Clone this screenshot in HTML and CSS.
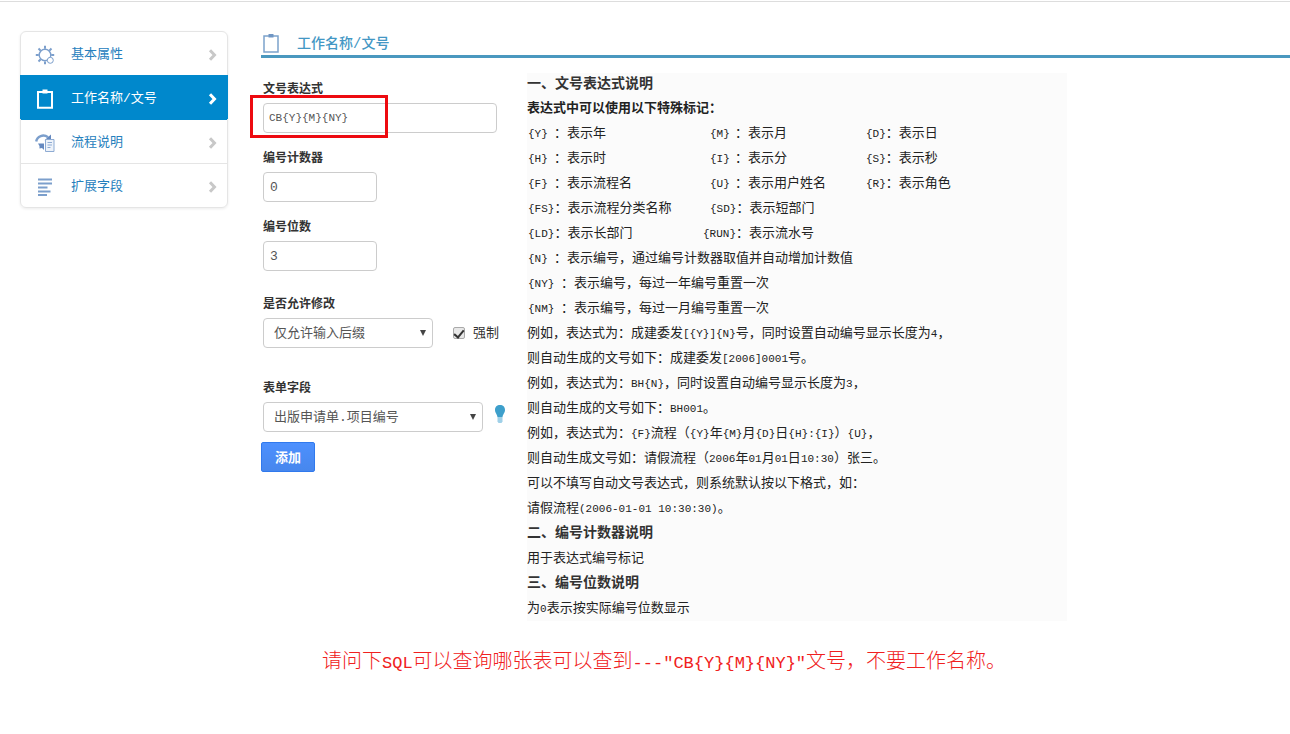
FILE: index.html
```
<!DOCTYPE html>
<html lang="zh-CN">
<head>
<meta charset="utf-8">
<title>工作名称/文号</title>
<link rel="stylesheet" href="styles.css">
</head>
<body>
<div class="layout">
  <nav class="menu">
    <a class="menu-item" href="#basic">
      <svg class="icon" viewBox="0 0 20 20" fill="none" stroke="#7c9fcc">
        <circle cx="10" cy="10" r="5.8" stroke-width="1.4"/>
        <path d="M10 .8v3M10 16.4v2.8M.8 10h3M16.2 10h3M3.5 3.5l2.2 2.2M16.5 3.5l-2.2 2.2M3.5 16.5l2.2-2.2" stroke-width="2"/>
        <circle cx="15.3" cy="15.3" r="3" fill="#fff"/>
      </svg>
      <span class="menu-text">基本属性</span>
      <svg class="chevron" viewBox="0 0 8 12"><path d="M1.5 1.2 6 6l-4.5 4.8" fill="none" stroke="currentColor" stroke-width="3"/></svg>
    </a>
    <a class="menu-item active" href="#name">
      <svg class="icon" viewBox="0 0 20 20"><path d="M3 3h14v15.8H3z" fill="none" stroke="#fff" stroke-width="2"/><path d="M7.5.5h5v4h-5z" fill="#fff"/></svg>
      <span class="menu-text">工作名称/文号</span>
      <svg class="chevron" viewBox="0 0 8 12"><path d="M1.5 1.2 6 6l-4.5 4.8" fill="none" stroke="currentColor" stroke-width="3"/></svg>
    </a>
    <a class="menu-item" href="#desc">
      <svg class="icon" viewBox="0 0 20 20">
        <path d="M1.2 8.500C2 3 8.500.8 13 4.200" fill="none" stroke="#7c9fcc" stroke-width="2.4"/>
        <path d="M16 1.5v5.800H9.500z" fill="#6589c0"/>
        <path d="M3 10.500h6v6.500l-2-2-2.500.5 0-2.500z" fill="#6589c0"/>
        <path d="M10.500 6.500h8.500v12h-8.500z" fill="#eef3fa" stroke="#8eabd3"/>
        <path d="M12.500 9.500h4.500M12.500 12h4.500M12.500 14.500h3" stroke="#8eabd3"/>
      </svg>
      <span class="menu-text">流程说明</span>
      <svg class="chevron" viewBox="0 0 8 12"><path d="M1.5 1.2 6 6l-4.5 4.8" fill="none" stroke="currentColor" stroke-width="3"/></svg>
    </a>
    <a class="menu-item" href="#fields">
      <svg class="icon" viewBox="0 0 20 20"><path d="M3 2.500h14M3 6.500h14M3 10.500h9.500M3 14.500h12.500M3 18h9" stroke="#7c9fcc" stroke-width="1.8"/></svg>
      <span class="menu-text">扩展字段</span>
      <svg class="chevron" viewBox="0 0 8 12"><path d="M1.5 1.2 6 6l-4.5 4.8" fill="none" stroke="currentColor" stroke-width="3"/></svg>
    </a>
  </nav>

  <main class="main">
    <h1 class="title">
      <svg class="icon" viewBox="0 0 20 20"><path d="M3 3h14v16H3z" fill="none" stroke="#7ca3cc" stroke-width="1.5"/><path d="M7.5 1h5v3.500h-5z" fill="#7096c4"/></svg>
      <span class="title-text">工作名称/文号</span>
    </h1>
    <div class="content">
      <form class="form">
        <div class="field">
          <label class="label" for="expr">文号表达式</label>
          <div class="marked">
            <input class="control code" id="expr" type="text" value="CB{Y}{M}{NY}">
            <div class="mark"></div>
          </div>
        </div>
        <div class="field">
          <label class="label" for="counter">编号计数器</label>
          <input class="control short" id="counter" type="text" value="0">
        </div>
        <div class="field">
          <label class="label" for="digits">编号位数</label>
          <input class="control short" id="digits" type="text" value="3">
        </div>
        <div class="field field-modify">
          <label class="label" for="modify">是否允许修改</label>
          <div class="row">
            <div class="select medium"><select class="control" id="modify"><option>仅允许输入后缀</option></select></div>
            <label class="check"><input class="checkbox" type="checkbox" checked>强制</label>
          </div>
        </div>
        <div class="field field-form">
          <label class="label" for="field">表单字段</label>
          <div class="row tight">
            <div class="select wide"><select class="control" id="field"><option>出版申请单.项目编号</option></select></div>
            <svg class="bulb" viewBox="0 0 12 20"><path d="M6 1C3 1 1 3 1 5.900c0 3 2.200 4 2.500 7.600h5C8.800 9.900 11 8.900 11 5.900 11 3 9 1 6 1z" fill="#3d9fcb"/><path d="M3.500 14h5v3.500L7.500 19h-3l-1-1.500z" fill="#9fd0e8"/></svg>
          </div>
        </div>
        <button class="button" type="button">添加</button>
      </form>

      <section class="help">
        <h2 class="help-title first">一、文号表达式说明</h2>
        <p class="strong">表达式中可以使用以下特殊标记：</p>
        <div class="marks">
          <div><code>{Y}</code>：表示年</div><div><code>{M}</code>：表示月</div><div><code>{D}</code>：表示日</div>
          <div><code>{H}</code>：表示时</div><div><code>{I}</code>：表示分</div><div><code>{S}</code>：表示秒</div>
          <div><code>{F}</code>：表示流程名</div><div><code>{U}</code>：表示用户姓名</div><div><code>{R}</code>：表示角色</div>
          <div><code>{FS}</code>：表示流程分类名称</div><div><code>{SD}</code>：表示短部门</div><div></div>
          <div><code>{LD}</code>：表示长部门</div><div><code class="long">{RUN}</code>：表示流水号</div><div></div>
        </div>
        <p class="mark-line"><code>{N}</code>：表示编号，通过编号计数器取值并自动增加计数值</p>
        <p class="mark-line two"><code>{NY}</code>：表示编号，每过一年编号重置一次</p>
        <p class="mark-line two"><code>{NM}</code>：表示编号，每过一月编号重置一次</p>
        <p>例如，表达式为：成建委发<code>[{Y}]{N}</code>号，同时设置自动编号显示长度为<code>4</code>，</p>
        <p>则自动生成的文号如下：成建委发<code>[2006]0001</code>号。</p>
        <p>例如，表达式为：<code>BH{N}</code>，同时设置自动编号显示长度为<code>3</code>，</p>
        <p>则自动生成的文号如下：<code>BH001</code>。</p>
        <p>例如，表达式为：<code>{F}</code>流程（<code>{Y}</code>年<code>{M}</code>月<code>{D}</code>日<code>{H}:{I}</code>）<code>{U}</code>，</p>
        <p>则自动生成文号如：请假流程（<code>2006</code>年<code>01</code>月<code>01</code>日<code>10:30</code>）张三。</p>
        <p>可以不填写自动文号表达式，则系统默认按以下格式，如：</p>
        <p>请假流程<code>(2006-01-01 10:30:30)</code>。</p>
        <h2 class="help-title">二、编号计数器说明</h2>
        <p>用于表达式编号标记</p>
        <h2 class="help-title">三、编号位数说明</h2>
        <p>为<code>0</code>表示按实际编号位数显示</p>
      </section>
    </div>
    <p class="question">请问下<code>SQL</code>可以查询哪张表可以查到<code>---"CB{Y}{M}{NY}"</code>文号，不要工作名称。</p>
  </main>
</div>
</body>
</html>
```
FILE: styles.css
```
* { box-sizing: border-box; }
body {
  margin: 0;
  background: #fff;
  color: #333;
  font: 13px/25px "Liberation Mono", "Noto Sans CJK SC", monospace;
}
body::before {
  content: "";
  display: block;
  height: 1px;
  margin-top: 1px;
  background: #ddd;
}
p, h1, h2 { margin: 0; }
code { font: 11px "Liberation Mono", monospace; }
.layout {
  display: flex;
  align-items: flex-start;
  padding: 29px 0 40px 20px;
}

.menu {
  flex: 0 0 208px;
  border: 1px solid #e5e5e5;
  border-radius: 6px;
  box-shadow: 0 1px 3px rgba(0, 0, 0, .08);
}
.menu-item {
  display: flex;
  align-items: center;
  height: 44px;
  padding: 2px 10px 0 14px;
  color: #2680bd;
  text-decoration: none;
}
.menu-item:first-child { height: 43px; }
.menu-item + .menu-item { border-top: 1px solid #e5e5e5; }
.menu-item.active {
  margin: 0 -1px;
  padding: 2px 11px 0 15px;
  border-color: #0088cc;
  background: #0088cc;
  color: #fff;
}
.menu-item.active + .menu-item { border-color: #0088cc; }
.icon { flex: none; width: 20px; height: 20px; }
.menu-text { flex: 1; padding-left: 16px; }
.chevron { width: 9px; height: 12px; color: #c8c8c8; }
.active .chevron { color: #fff; }

.main { flex: 1; min-width: 0; padding-left: 33px; }
.title {
  display: flex;
  align-items: center;
  gap: 16px;
  height: 27px;
  border-bottom: 3px solid #4a98bf;
  color: #4397c4;
  font-size: 14px;
  font-weight: 500;
}
.title-text { padding-top: 2px; }
.content { display: flex; align-items: flex-start; gap: 30px; padding-top: 15px; }

.form { flex: 0 0 236px; min-width: 0; padding: 5px 0 0 2px; }
.field { margin-bottom: 14px; }
.field-modify { margin: 22px 0 29px; }
.field-form { margin-bottom: 10px; }
.label {
  display: block;
  margin-bottom: 3px;
  padding-top: 2px;
  font-size: 12px;
  font-weight: 700;
  line-height: 20px;
}
.control {
  display: block;
  width: 100%;
  height: 30px;
  padding: 0 6px;
  border: 1px solid #ccc;
  border-radius: 4px;
  background: #fff;
  color: #555;
  font: 13px "Liberation Mono", "Noto Sans CJK SC", monospace;
}
.control.code { padding: 0 5px; font-size: 11px; }
.short { width: 114px; }
.marked { position: relative; }
.mark {
  position: absolute;
  inset: -8px 109px -5px -13px;
  border: 3px solid #ed0a10;
  pointer-events: none;
}
.row { display: flex; align-items: center; gap: 20px; }
.row.tight { gap: 11px; }
.select { position: relative; flex: none; }
.select .control { appearance: none; padding: 0 20px 0 10px; }
.select::after {
  content: "";
  position: absolute;
  top: 12px;
  right: 7px;
  border: solid transparent;
  border-width: 6px 3px 0;
  border-top-color: #444;
  pointer-events: none;
}
.medium { width: 170px; }
.wide { width: 220px; }
.check { display: flex; align-items: center; gap: 8px; white-space: nowrap; }
.checkbox {
  appearance: none;
  display: grid;
  place-items: center;
  width: 12px;
  height: 12px;
  margin: 0;
  border: 1px solid #aaa;
  border-radius: 2px;
  background: #e8e8e8;
}
.checkbox:checked::after {
  content: "";
  width: 8px;
  height: 4px;
  border: solid #333;
  border-width: 0 0 2px 2px;
  transform: rotate(-50deg);
}
.bulb { flex: none; width: 12px; height: 20px; margin-bottom: 6px; }
.button {
  display: block;
  height: 30px;
  margin-left: -2px;
  padding: 0 13px 2px;
  border: 1px solid #3079ed;
  border-radius: 2px;
  background: linear-gradient(#4d90fe, #4787ed);
  color: #fff;
  font: 700 13px "Noto Sans CJK SC", sans-serif;
}

.help { flex: 0 1 540px; background: #fbfbfb; color: #222; }
.help-title { font-size: 14px; font-weight: 700; line-height: 25px; color: #333; }
.help-title.first { line-height: 23px; }
.strong { font-weight: 700; }
.marks {
  display: grid;
  grid-template-columns: 176px 162px 1fr;
}
.marks code, .mark-line code { display: inline-block; min-width: 27px; padding-left: 1px; }
.marks div:nth-child(3n + 2) code { min-width: 32px; padding-left: 7px; }
.marks div:nth-child(3n + 2) .long { padding-left: 0; }
.marks div:nth-child(3n) code { min-width: 20px; }
.mark-line.two code { min-width: 34px; }
.question {
  padding: 26px 0 0 61px;
  color: #f02020;
  font-size: 20px;
  font-weight: 300;
  line-height: 32px;
}
.question code { font-size: 17px; }
```
